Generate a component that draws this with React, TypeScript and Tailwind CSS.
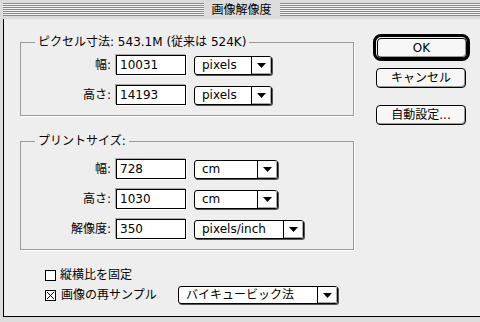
import React from "react";

const font = "font-['DejaVu_Sans','Noto_Sans_CJK_JP',sans-serif]";

function Arrow() {
  return (
    <svg width="9" height="5" viewBox="0 0 9 5">
      <polygon points="0,0 9,0 4.5,5" fill="black" />
    </svg>
  );
}

function Popup({ label, width }: { label: string; width: string }) {
  return (
    <div
      className={`flex h-[19px] ${width} rounded-[3px] border border-black bg-white shadow-[1px_1px_0_#555]`}
    >
      <span className="flex-1 pl-[7px] leading-[17px] whitespace-nowrap">{label}</span>
      <span className="flex w-[20px] items-center justify-center border-l border-black shadow-[inset_-1px_-1px_0_#aaa]">
        <Arrow />
      </span>
    </div>
  );
}

function Field({ value }: { value: string }) {
  return (
    <div className="h-[20px] w-[70px] border border-black bg-white pl-[3px] leading-[18px] shadow-[-1px_-1px_0_#aaa,1px_1px_0_#fff]">
      {value}
    </div>
  );
}

type row = { label: string; value: string; unit: string; width: string };

function Row({ r }: { r: row }) {
  return (
    <div className="flex items-center">
      <span className="w-[90px] text-right">{r.label}:</span>
      <div className="ml-[5px]">
        <Field value={r.value} />
      </div>
      <div className="ml-[8px]">
        <Popup label={r.unit} width={r.width} />
      </div>
    </div>
  );
}

function Group({ title, rows, top }: { title: string; rows: row[]; top: string }) {
  return (
    <fieldset className="w-[334px] border border-[#9a9a9a] pb-[10px] shadow-[1px_1px_0_#fff]">
      <legend className="ml-[14px] px-[3px] leading-[13px]">{title}</legend>
      <div className={`flex flex-col gap-[10px] ${top}`}>
        {rows.map((r, i) => (
          <Row key={i} r={r} />
        ))}
      </div>
    </fieldset>
  );
}

function Button({ children }: { children: React.ReactNode }) {
  return (
    <div className="flex h-[20px] w-[90px] items-center justify-center rounded-[4px] border border-black bg-[#f7f7f7] shadow-[inset_-1px_-1px_0_#999,inset_1px_1px_0_#fff]">
      {children}
    </div>
  );
}

function Check({ checked }: { checked?: boolean }) {
  return (
    <div className="flex h-[11px] w-[11px] items-center justify-center border border-black bg-white">
      {checked && (
        <svg width="9" height="9" viewBox="0 0 9 9">
          <path d="M1 1 L8 8 M8 1 L1 8" stroke="black" strokeWidth="1" />
        </svg>
      )}
    </div>
  );
}

const stripes =
  "h-[13px] flex-1 bg-[repeating-linear-gradient(to_bottom,#8a8a8a_0_1px,#f2f2f2_1px_2px)]";

export default function App() {
  return (
    <div className={`flex h-[322px] w-[480px] flex-col overflow-hidden bg-[#dcdcdc] text-[12px] text-black ${font}`}>
      {/* title bar */}
      <div className="flex h-[19px] items-center pl-[3px]">
        <div className={`${stripes} max-w-[204px]`} />
        <span className="px-[8px] leading-[14px]">画像解像度</span>
        <div className={stripes} />
      </div>

      {/* body */}
      <div className="mb-[5px] ml-[3px] flex flex-1 border-b border-l border-black bg-[#eeeeee]">
        <div className="flex flex-col pl-[16px] pt-[17px]">
          <Group
            title="ピクセル寸法: 543.1M (従来は 524K)"
            top="mt-[6px]"
            rows={[
              { label: "幅", value: "10031", unit: "pixels", width: "w-[78px]" },
              { label: "高さ", value: "14193", unit: "pixels", width: "w-[78px]" },
            ]}
          />
          <div className="h-[19px]" />
          <Group
            title="プリントサイズ:"
            top="mt-[11px]"
            rows={[
              { label: "幅", value: "728", unit: "cm", width: "w-[84px]" },
              { label: "高さ", value: "1030", unit: "cm", width: "w-[84px]" },
              { label: "解像度", value: "350", unit: "pixels/inch", width: "w-[110px]" },
            ]}
          />

          <div className="mt-[15px] flex flex-col pl-[25px]">
            <div className="flex h-[20px] items-center gap-[4px]">
              <Check />
              <span>縦横比を固定</span>
            </div>
            <div className="flex h-[20px] items-center">
              <div className="flex w-[133px] items-center gap-[5px]">
                <Check checked />
                <span>画像の再サンプル</span>
              </div>
              <div className="flex h-[18px] w-[160px] rounded-[3px] border border-black bg-white shadow-[1px_1px_0_#555]">
                <span className="flex-1 pl-[7px] leading-[16px]">バイキュービック法</span>
                <span className="flex w-[20px] items-center justify-center border-l border-black shadow-[inset_-1px_-1px_0_#aaa]">
                  <Arrow />
                </span>
              </div>
            </div>
          </div>
        </div>

        {/* buttons */}
        <div className="ml-[19px] flex flex-col pt-[15px]">
          <div className="flex h-[27px] w-[97px] items-center justify-center rounded-[8px] border-[3px] border-black">
            <Button>OK</Button>
          </div>
          <div className="mt-[7px] ml-[3px]">
            <Button>キャンセル</Button>
          </div>
          <div className="mt-[17px] ml-[3px]">
            <Button>自動設定...</Button>
          </div>
        </div>
      </div>
    </div>
  );
}
